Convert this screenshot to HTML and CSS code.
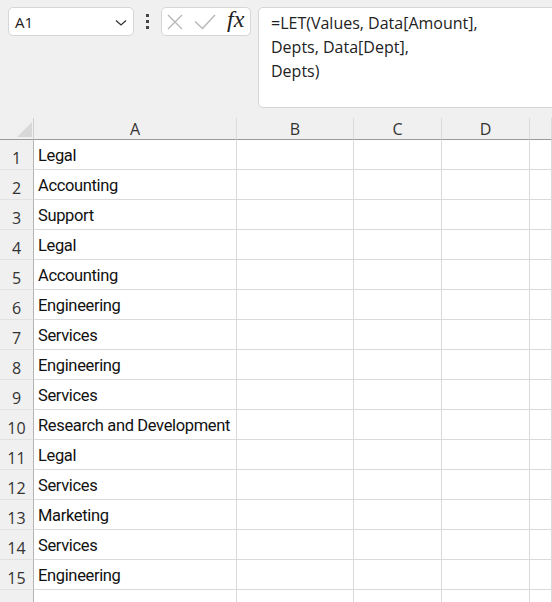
FILE: index.html
```html
<!DOCTYPE html>
<html>
<head>
<meta charset="utf-8">
<link rel="stylesheet" href="styles.css">
</head>
<body>
<div class="toolbar">
  <div class="namebox">
    <span class="ref">A1</span>
    <svg class="chev" width="12" height="8" viewBox="0 0 12 8"><path d="M1 1.5 L6 6 L11 1.5" fill="none" stroke="#333" stroke-width="1.3"/></svg>
  </div>
  <div class="dots"><i></i><i></i><i></i></div>
  <div class="fxbox">
    <svg class="ico" width="18" height="18" viewBox="0 0 18 18"><path d="M2 2 L16 16 M16 2 L2 16" stroke="#b8b8b8" stroke-width="1.4" fill="none"/></svg>
    <svg class="ico" width="22" height="18" viewBox="0 0 22 18"><path d="M1 8.5 L8.5 15.5 L21 2" stroke="#b8b8b8" stroke-width="1.4" fill="none"/></svg>
    <span class="fx">fx</span>
  </div>
  <div class="formula">
    <div>=LET(Values, Data[Amount],</div>
    <div>Depts, Data[Dept],</div>
    <div>Depts)</div>
  </div>
</div>
<div class="sheet">
  <div class="corner"><span class="tri"></span></div>
  <div class="colh">A</div><div class="colh">B</div><div class="colh">C</div><div class="colh">D</div><div class="colh"></div>

  <div class="rowh">1</div><div class="cell">Legal</div><div class="cell"></div><div class="cell"></div><div class="cell"></div><div class="cell"></div>
  <div class="rowh">2</div><div class="cell">Accounting</div><div class="cell"></div><div class="cell"></div><div class="cell"></div><div class="cell"></div>
  <div class="rowh">3</div><div class="cell">Support</div><div class="cell"></div><div class="cell"></div><div class="cell"></div><div class="cell"></div>
  <div class="rowh">4</div><div class="cell">Legal</div><div class="cell"></div><div class="cell"></div><div class="cell"></div><div class="cell"></div>
  <div class="rowh">5</div><div class="cell">Accounting</div><div class="cell"></div><div class="cell"></div><div class="cell"></div><div class="cell"></div>
  <div class="rowh">6</div><div class="cell">Engineering</div><div class="cell"></div><div class="cell"></div><div class="cell"></div><div class="cell"></div>
  <div class="rowh">7</div><div class="cell">Services</div><div class="cell"></div><div class="cell"></div><div class="cell"></div><div class="cell"></div>
  <div class="rowh">8</div><div class="cell">Engineering</div><div class="cell"></div><div class="cell"></div><div class="cell"></div><div class="cell"></div>
  <div class="rowh">9</div><div class="cell">Services</div><div class="cell"></div><div class="cell"></div><div class="cell"></div><div class="cell"></div>
  <div class="rowh">10</div><div class="cell">Research and Development</div><div class="cell"></div><div class="cell"></div><div class="cell"></div><div class="cell"></div>
  <div class="rowh">11</div><div class="cell">Legal</div><div class="cell"></div><div class="cell"></div><div class="cell"></div><div class="cell"></div>
  <div class="rowh">12</div><div class="cell">Services</div><div class="cell"></div><div class="cell"></div><div class="cell"></div><div class="cell"></div>
  <div class="rowh">13</div><div class="cell">Marketing</div><div class="cell"></div><div class="cell"></div><div class="cell"></div><div class="cell"></div>
  <div class="rowh">14</div><div class="cell">Services</div><div class="cell"></div><div class="cell"></div><div class="cell"></div><div class="cell"></div>
  <div class="rowh">15</div><div class="cell">Engineering</div><div class="cell"></div><div class="cell"></div><div class="cell"></div><div class="cell"></div>
  <div class="rowh"></div><div class="cell"></div><div class="cell"></div><div class="cell"></div><div class="cell"></div><div class="cell"></div>
</div>
</body>
</html>
```
FILE: styles.css
```css
html, body {
  margin: 0;
  padding: 0;
  background: #f0f0f0;
  overflow: hidden;
  width: 552px;
  height: 602px;
}
.toolbar {
  display: flex;
  align-items: flex-start;
  padding: 7px 0 0 8px;
  height: 118px;
  box-sizing: border-box;
  font-family: "Open Sans", sans-serif;
  color: #222;
  overflow: hidden;
}
.namebox {
  flex: none;
  width: 126px;
  height: 29px;
  box-sizing: border-box;
  background: #fff;
  border: 1px solid #d6d6d6;
  border-radius: 5px;
  display: flex;
  align-items: center;
  justify-content: space-between;
  padding: 0 6px 0 6px;
  font-size: 15px;
}
.chev { margin-top: 2px; }
.dots {
  flex: none;
  width: 27px;
  height: 29px;
  display: flex;
  flex-direction: column;
  align-items: center;
  justify-content: center;
  gap: 3px;
}
.dots i {
  display: block;
  width: 3px;
  height: 3px;
  background: #444;
}
.fxbox {
  flex: none;
  width: 90px;
  height: 29px;
  box-sizing: border-box;
  background: #fff;
  border: 1px solid #d6d6d6;
  border-radius: 5px;
  display: flex;
  align-items: center;
  padding: 0 0 0 4px;
  gap: 10px;
}
.fxbox .ico { flex: none; }
.fx {
  font-family: "Liberation Serif", serif;
  font-style: italic;
  font-size: 24px;
  color: #222;
  margin-left: 1px;
  margin-top: -4px;
}
.formula {
  margin-left: 7px;
  flex: none;
  width: 310px;
  height: 101px;
  box-sizing: border-box;
  background: #fff;
  border: 1px solid #d6d6d6;
  border-radius: 5px;
  padding: 3px 0 0 12px;
  font-size: 16px;
  line-height: 24px;
}
.sheet {
  display: grid;
  grid-template-columns: 34px 203px 117px 88px 88px 1fr;
  grid-template-rows: 22px repeat(16, 30px);
  background: #fff;
}
.corner, .colh {
  background: #f0f0f0;
  border-bottom: 1px solid #9b9b9b;
  box-sizing: border-box;
}
.corner {
  border-right: 1px solid #d0d0d0;
  position: relative;
}
.tri {
  position: absolute;
  right: 1px;
  bottom: 2px;
  width: 0;
  height: 0;
  border-left: 15px solid transparent;
  border-bottom: 15px solid #d8d8d8;
}
.colh {
  border-right: 1px solid #dcdcdc;
  font-family: "Open Sans", sans-serif;
  font-size: 16px;
  color: #333;
  text-align: center;
  line-height: 20px;
  padding-top: 1px;
}
.rowh {
  background: #f0f0f0;
  border-right: 1px solid #b4b4b4;
  border-bottom: 1px solid #e2e2e2;
  box-sizing: border-box;
  font-family: "Open Sans", sans-serif;
  font-size: 16px;
  color: #333;
  text-align: center;
  line-height: 19px;
  padding-top: 9px;
}
.cell {
  border-right: 1px solid #dadada;
  border-bottom: 1px solid #dadada;
  box-sizing: border-box;
  font-family: Roboto, sans-serif;
  font-size: 16.5px;
  letter-spacing: -0.35px;
  color: #111;
  padding: 6px 0 0 4px;
  line-height: 19px;
  white-space: nowrap;
}
```
